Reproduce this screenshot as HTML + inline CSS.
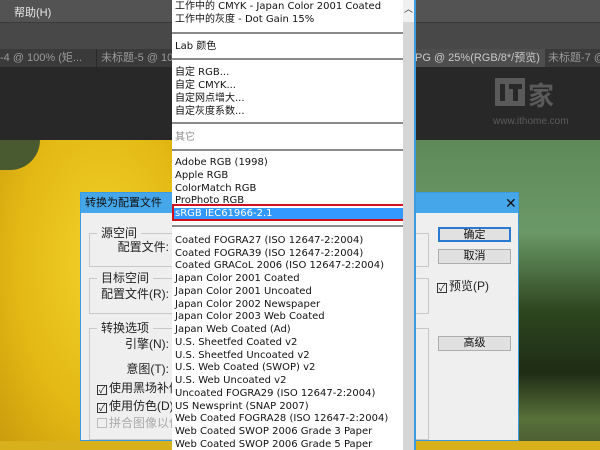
<!DOCTYPE html>
<html><head><meta charset="utf-8"><style>
*{margin:0;padding:0;box-sizing:border-box}
body{width:600px;height:450px;overflow:hidden;position:relative;background:#282828;font-family:"Liberation Sans","Noto Sans CJK SC",sans-serif;font-size:11px}
.a{position:absolute}
.menu{left:0;top:0;width:600px;height:22px;background:#535353;color:#e8e8e8;font-size:11px}
.tool{left:0;top:22px;width:600px;height:27px;background:#484848;border-top:1px solid #3a3a3a}
.tabs{left:0;top:49px;width:600px;height:18px;background:#3a3a3a;color:#9a9a9a;font-size:11px;line-height:18px;white-space:nowrap;overflow:hidden}
.tabs span{white-space:nowrap;height:18px;overflow:hidden}
.list{left:172px;top:0;width:231px;height:450px;background:#fff;color:#111;font-family:"DejaVu Sans","Noto Sans CJK SC",sans-serif;font-size:10px;line-height:12.75px;overflow:hidden}
.list div{padding-left:3px;white-space:nowrap}
.sep{position:absolute;left:0;width:231px;height:2px;background:#8a8a8a}
.dlg{left:80px;top:192px;width:439px;height:249px;background:#efefef;border:1px solid #3a9be0}
.tb{left:0;top:0;width:437px;height:20px;background:#45a6ea;color:#111;font-size:11px;line-height:20px;padding-left:4px}
.grp{position:absolute;border:1px solid #c8c8c8}
.gl{position:absolute;background:#efefef;padding:0 4px;font-size:12px;color:#222}
.btn{position:absolute;left:357px;width:73px;height:15px;background:#e1e1e1;border:1px solid #adadad;text-align:center;font-size:11px;line-height:13px;color:#111}
.lab{position:absolute;font-size:12px;color:#222;white-space:nowrap}
.rl{left:0;width:88px;text-align:right}
.cb{display:inline-block;width:10px;height:10px;border:1px solid #333;vertical-align:-1px;margin-right:2px;font-size:9px;line-height:8px;text-align:center}
</style></head><body>
<div class="a menu"><span class="a" style="left:14px;top:4px">帮助(H)</span></div>
<div class="a tool"></div>
<div class="a tabs">
<span class="a" style="left:0;width:92px">-4 @ 100% (矩...&nbsp;&nbsp;&nbsp;×</span>
<span class="a" style="left:96px;width:76px;border-left:1px solid #2a2a2a;padding-left:4px">未标题-5 @ 100</span>
<span class="a" style="left:405px;width:140px;background:#4e4e4e;color:#c8c8c8;padding-left:10px">PG @ 25%(RGB/8*/预览)&nbsp;&nbsp;×</span>
<span class="a" style="left:548px;width:52px;color:#9a9a9a">未标题-7 @</span>
</div>
<!-- watermark -->
<div class="a" style="left:495px;top:78px;width:30px;height:28px;background:#5a5a5a"></div>
<div class="a" style="left:500px;top:84px;width:5px;height:17px;background:#282828"></div>
<div class="a" style="left:509px;top:84px;width:13px;height:5px;background:#282828"></div>
<div class="a" style="left:513px;top:84px;width:5px;height:17px;background:#282828"></div>
<div class="a" style="left:528px;top:76px;color:#5a5a5a;font-size:26px;font-weight:bold">家</div>
<div class="a" style="left:493px;top:116px;color:#5c5c5c;font-size:10px">www.ithome.com</div>
<!-- photo -->
<div class="a" style="left:0;top:140px;width:172px;height:310px;background:radial-gradient(ellipse at 60% 40%,#f3d22a,#e3b814 60%,#c99a0c)"></div>
<div class="a" style="left:0;top:140px;width:40px;height:30px;background:#4a5a30;border-radius:0 0 30px 0"></div>
<div class="a" style="left:416px;top:140px;width:184px;height:310px;background:linear-gradient(180deg,#5d8a58 0%,#6a9866 30%,#2e4620 55%,#1e2c14 75%,#58703a 90%,#4a5a30 100%)"></div>
<div class="a" style="left:0;top:441px;width:600px;height:9px;background:#d8b01c"></div>
<!-- dialog -->
<div class="a dlg">
<div class="a tb">转换为配置文件<span class="a" style="left:424px;top:0;font-size:14px">✕</span></div>
<div class="grp" style="left:8px;top:40px;width:340px;height:34px"></div><span class="gl" style="left:16px;top:31px">源空间</span>
<div class="grp" style="left:8px;top:85px;width:340px;height:36px"></div><span class="gl" style="left:16px;top:76px">目标空间</span>
<div class="grp" style="left:8px;top:135px;width:340px;height:112px"></div><span class="gl" style="left:16px;top:126px">转换选项</span>
<span class="lab rl" style="top:45px">配置文件:</span>
<span class="lab rl" style="top:92px">配置文件(R):</span>
<span class="lab rl" style="top:142px">引擎(N):</span>
<span class="lab rl" style="top:167px">意图(T):</span>
<span class="lab" style="left:16px;top:186px"><span class="cb">✓</span>使用黑场补偿</span>
<span class="lab" style="left:16px;top:204px"><span class="cb">✓</span>使用仿色(D)</span>
<span class="lab" style="left:16px;top:221px;color:#aaa"><span class="cb" style="border-color:#bbb"></span>拼合图像以保</span>
<div class="btn" style="top:34px;border:2px solid #2a7ad0">确定</div>
<div class="btn" style="top:56px">取消</div>
<span class="lab" style="left:356px;top:84px"><span class="cb">✓</span>预览(P)</span>
<div class="btn" style="top:143px">高级</div>
</div>
<!-- dropdown list -->
<div class="a list">
<div style="margin-top:1px">工作中的 CMYK - Japan Color 2001 Coated</div>
<div>工作中的灰度 - Dot Gain 15%</div>
<div style="margin-top:14px">Lab 颜色</div>
<div style="margin-top:14px">自定 RGB...</div>
<div>自定 CMYK...</div>
<div>自定网点增大...</div>
<div>自定灰度系数...</div>
<div style="margin-top:14px;color:#888">其它</div>
<div style="margin-top:12px">Adobe RGB (1998)</div>
<div>Apple RGB</div>
<div>ColorMatch RGB</div>
<div>ProPhoto RGB</div>
<div style="background:#3399ff;color:#fff">sRGB IEC61966-2.1</div>
<div style="margin-top:14px">Coated FOGRA27 (ISO 12647-2:2004)</div>
<div>Coated FOGRA39 (ISO 12647-2:2004)</div>
<div>Coated GRACoL 2006 (ISO 12647-2:2004)</div>
<div>Japan Color 2001 Coated</div>
<div>Japan Color 2001 Uncoated</div>
<div>Japan Color 2002 Newspaper</div>
<div>Japan Color 2003 Web Coated</div>
<div>Japan Web Coated (Ad)</div>
<div>U.S. Sheetfed Coated v2</div>
<div>U.S. Sheetfed Uncoated v2</div>
<div>U.S. Web Coated (SWOP) v2</div>
<div>U.S. Web Uncoated v2</div>
<div>Uncoated FOGRA29 (ISO 12647-2:2004)</div>
<div>US Newsprint (SNAP 2007)</div>
<div>Web Coated FOGRA28 (ISO 12647-2:2004)</div>
<div>Web Coated SWOP 2006 Grade 3 Paper</div>
<div>Web Coated SWOP 2006 Grade 5 Paper</div>
<div class="sep" style="top:32px"></div>
<div class="sep" style="top:58px"></div>
<div class="sep" style="top:122px"></div>
<div class="sep" style="top:149px"></div>
<div class="sep" style="top:225px"></div>
</div>
<div class="a" style="left:172px;top:204px;width:236px;height:17px;border:2px solid #d0101c"></div>
<div class="a" style="left:403px;top:0;width:13px;height:450px;background:#d6d6d6;border-right:2px solid #3a9be0"></div>
<div class="a" style="left:403px;top:0;width:11px;height:22px;background:#f0f0f0;text-align:center;font-size:9px;line-height:18px;color:#333">︿</div>
</body></html>
